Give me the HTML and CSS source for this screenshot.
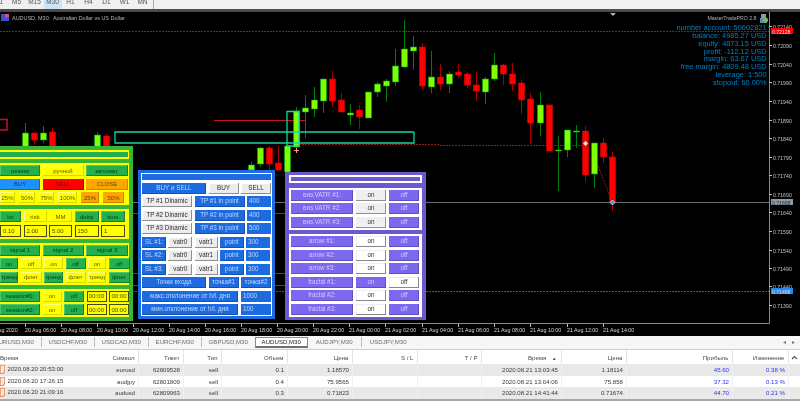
FILE: index.html
```html
<!DOCTYPE html>
<html lang="ru">
<head>
<meta charset="utf-8">
<title>AUDUSD, M30</title>
<link rel="stylesheet" href="styles.css">
</head>
<body>
<div class="app">
  <div class="toolbar">
    <div class="tf-group">
      <span class="tf">M1</span><span class="tf">M5</span><span class="tf">M15</span><span class="tf tf-on">M30</span><span class="tf">H1</span><span class="tf">H4</span><span class="tf">D1</span><span class="tf">W1</span><span class="tf">MN</span>
    </div>
  </div>

  <div class="chart">
    <svg class="plot" viewBox="0 12 800 324" width="800" height="324" xmlns="http://www.w3.org/2000/svg">
      <!-- levels -->
      <path class="dot-red" d="M0 31.5H769"/>
      <path class="dot-red" d="M296 144.5H440M440 145.5H585"/>
      <path class="dot-red" d="M594 155L612 202"/>
      <path class="line-grey" d="M0 202.5H769"/>
      <path class="dot-blue" d="M0 291.5H769"/>
      <path class="line-red" d="M214 120.5H305M0 146.5H131M133 213.5H290M133 273.5H290M133 285.5H290"/>
      <path class="box-red" d="M0 119.5H7V130H0"/>
      <!-- wicks -->
      <path class="wick-g" d="M25.5 123V147M43.5 126V143M97.5 132V147M251.5 162V170M260.5 147V167M296.5 107V149M305.5 95V138M314.5 87V117M323.5 79V113M350.5 104V125M368.5 92V118M377.5 82V97M386.5 79V102M395.5 49V86M404.5 20V67M413.5 36V70M431.5 51V93M449.5 71V93M485.5 77V104M494.5 53V81M540.5 92V136M558.5 136V191M567.5 130V157M576.5 125V148M594.5 143V188"/>
      <path class="wick-r" d="M34.5 133V145M52.5 128V147M106.5 134V147M269.5 146V170M278.5 146V170M332.5 71V107M341.5 93V112M359.5 105V129M422.5 43V89M440.5 64V90M458.5 64V78M467.5 72V88M476.5 72V101M503.5 64V85M512.5 63V91M521.5 80V114M530.5 93V144M585.5 126V182M603.5 138V163M612.5 152V211"/>
      <!-- bodies -->
      <path class="body-g" d="M22.5 133h6v14h-6zM40.5 133h6v7h-6zM94.5 135h6v12h-6zM248.5 165h6v5h-6zM257.5 148h6v16h-6zM284.5 146h6v26h-6zM293.5 111h6v36h-6zM302.5 108h6v4h-6zM311.5 100h6v9h-6zM320.5 79h6v22h-6zM347.5 113h6v2h-6zM365.5 92h6v26h-6zM374.5 84h6v8h-6zM383.5 81h6v5h-6zM392.5 66h6v16h-6zM401.5 49h6v18h-6zM410.5 47h6v4h-6zM428.5 77h6v10h-6zM446.5 74h6v10h-6zM482.5 79h6v13h-6zM491.5 65h6v14h-6zM537.5 105h6v18h-6zM555.5 150h6v1h-6zM564.5 130h6v20h-6zM573.5 131h6v1h-6zM591.5 143h6v31h-6z"/>
      <path class="body-r" d="M31.5 133h6v7h-6zM49.5 132h6v15h-6zM103.5 136h6v11h-6zM266.5 148h6v16h-6zM275.5 163h6v7h-6zM329.5 79h6v22h-6zM338.5 100h6v12h-6zM356.5 110h6v7h-6zM419.5 47h6v39h-6zM437.5 77h6v7h-6zM455.5 72h6v3h-6zM464.5 74h6v11h-6zM473.5 85h6v6h-6zM500.5 65h6v9h-6zM509.5 74h6v10h-6zM518.5 83h6v17h-6zM527.5 99h6v24h-6zM546.5 105h6v46h-6zM582.5 131h6v44h-6zM600.5 143h6v14h-6zM609.5 157h6v46h-6z"/>
      <!-- teal boxes -->
      <path class="box-teal" d="M414 132H115V143H414V132"/>
      <path class="box-teal" d="M287 146V111.5H299V146H287"/>
      <!-- markers -->
      <path class="mark-o" d="M296.5 148v5M294 150.5h5"/>
      <path class="mark-w" d="M585.5 141l2.5 2.5-2.5 2.5-2.5-2.5z"/>
      <path class="mark-b" d="M612.5 200l2.5 2.5-2.5 2.5-2.5-2.5z"/>
      <path class="tri" d="M610 13h6l-3 3z"/>
      <!-- frame -->
      <path class="frame" d="M769.5 12V323.5H0"/>
      <path class="tick" d="M769 26.5h3M769 45.5h3M769 64.5h3M769 82.5h3M769 101.5h3M769 120.5h3M769 138.5h3M769 157.5h3M769 175.5h3M769 194.5h3M769 212.5h3M769 231.5h3M769 250.5h3M769 268.5h3M769 286.5h3M769 305.5h3"/>
      <path class="tick" d="M25.5 324v3M61.5 324v3M97.5 324v3M133.5 324v3M169.5 324v3M205.5 324v3M241.5 324v3M277.5 324v3M313.5 324v3M349.5 324v3M385.5 324v3M422.5 324v3M458.5 324v3M494.5 324v3M530.5 324v3M567.5 324v3M603.5 324v3"/>
      <!-- symbol flag -->
      <rect class="flag-b" x="1" y="14" width="8" height="7"/>
      <path class="flag-r" d="M5 14h4v3.500H5z"/>
      <text class="chart-title" x="12" y="20">AUDUSD, M30:  Australian Dollar vs US Dollar</text>
      <!-- price axis -->
      <g class="price">
        <text x="773" y="28.500">0.72140</text><text x="773" y="47.500">0.72090</text><text x="773" y="66.500">0.72040</text><text x="773" y="84.500">0.71990</text><text x="773" y="103.500">0.71940</text><text x="773" y="122.500">0.71890</text><text x="773" y="140.500">0.71840</text><text x="773" y="159.500">0.71790</text><text x="773" y="177.500">0.71740</text><text x="773" y="196.500">0.71690</text><text x="773" y="214.500">0.71640</text><text x="773" y="233.500">0.71590</text><text x="773" y="252.500">0.71540</text><text x="773" y="270.500">0.71490</text><text x="773" y="288.500">0.71440</text><text x="773" y="307.500">0.71390</text>
      </g>
      <rect class="bd-red" x="771" y="28" width="22" height="6"/>
      <text class="bd-text" x="772" y="33.500">0.72128</text>
      <rect class="bd-grey" x="771" y="199" width="22" height="6"/>
      <text class="bd-text dark" x="772" y="204.500">0.71668</text>
      <rect class="bd-blue" x="771" y="288" width="22" height="6"/>
      <text class="bd-text" x="772" y="293.500">0.71458</text>
      <!-- time axis -->
      <g class="time">
        <text x="-12" y="331.500">20 Aug 2020</text><text x="25" y="331.500">20 Aug 06:00</text><text x="61" y="331.500">20 Aug 08:00</text><text x="97" y="331.500">20 Aug 10:00</text><text x="133" y="331.500">20 Aug 12:00</text><text x="169" y="331.500">20 Aug 14:00</text><text x="205" y="331.500">20 Aug 16:00</text><text x="241" y="331.500">20 Aug 18:00</text><text x="277" y="331.500">20 Aug 20:00</text><text x="313" y="331.500">20 Aug 22:00</text><text x="349" y="331.500">21 Aug 00:00</text><text x="385" y="331.500">21 Aug 02:00</text><text x="422" y="331.500">21 Aug 04:00</text><text x="458" y="331.500">21 Aug 06:00</text><text x="494" y="331.500">21 Aug 08:00</text><text x="530" y="331.500">21 Aug 10:00</text><text x="567" y="331.500">21 Aug 12:00</text><text x="603" y="331.500">21 Aug 14:00</text>
      </g>
    </svg>

    <div class="account">
      <div class="acc-head"><span>MasterTradePRO 2.8</span>
        <svg class="acc-ico" width="8" height="9" viewBox="0 0 8 9" xmlns="http://www.w3.org/2000/svg"><rect x="1" y="0" width="5" height="4" fill="#8a9aa8"/><rect x="0" y="4" width="7" height="5" fill="#5f8fb0"/><circle cx="5.500" cy="6" r="2.500" fill="#6fc04a"/></svg>
      </div>
      <div>number account: 50602821</div>
      <div>balance: 4985.27 USD</div>
      <div>equity: 4873.15 USD</div>
      <div>profit: -112.12 USD</div>
      <div>margin: 63.67 USD</div>
      <div>free margin: 4809.48 USD</div>
      <div>leverage: 1:500</div>
      <div>stopout: 60.00%</div>
    </div>

    <section class="panel-g">
      <div class="g-title"><span class="g-bar"></span></div>
      <div class="g-sec">
        <div class="row gc-3"><button class="g-btn">режим</button><button class="y-btn">ручной</button><button class="g-btn">автомат.</button></div>
        <div class="row gc-3"><button class="b-btn">BUY</button><button class="r-btn">SELL</button><button class="o-btn">CLOSE</button></div>
        <div class="row gc-pct"><button class="y-btn">25%</button><button class="y-btn">50%</button><button class="y-btn">75%</button><button class="y-btn">100%</button><button class="o-btn">25%</button><button class="o-btn">50%</button></div>
      </div>
      <div class="g-sec">
        <div class="row gc-5"><button class="g-btn">lot</button><button class="y-btn">risk</button><button class="y-btn">MM</button><button class="g-btn">delta</button><button class="g-btn">time</button></div>
        <div class="row gc-5 tall"><span class="g-in">0.10</span><span class="g-in">2.00</span><span class="g-in">5.00</span><span class="g-in">150</span><span class="g-in">1</span></div>
      </div>
      <div class="g-sec">
        <div class="row gc-3"><button class="g-btn">signal 1</button><button class="g-btn">signal 2</button><button class="g-btn">signal 3</button></div>
        <div class="row gc-6"><button class="g-btn">on</button><button class="y-btn">off</button><button class="y-btn">on</button><button class="g-btn">off</button><button class="y-btn">on</button><button class="g-btn">off</button></div>
        <div class="row gc-6"><button class="g-btn">тренд</button><button class="y-btn">флет</button><button class="g-btn">тренд</button><button class="y-btn">флет</button><button class="y-btn">тренд</button><button class="g-btn">флет</button></div>
      </div>
      <div class="g-sec">
        <div class="row gc-ses"><button class="g-btn">session#1:</button><button class="y-btn">on</button><button class="g-btn">off</button><span class="g-in c">00:00</span><span class="g-in c">00:00</span></div>
        <div class="row gc-ses"><button class="g-btn">session#2:</button><button class="y-btn">on</button><button class="g-btn">off</button><span class="g-in c">00:00</span><span class="g-in c">00:00</span></div>
      </div>
    </section>

    <section class="panel-b">
      <div class="b-title"></div>
      <div class="row bc-a"><button class="bl">BUY и SELL</button><button class="gr">BUY</button><button class="gr">SELL</button></div>
      <div class="row bc-b"><button class="gr">TP #1 Dinamic</button><button class="bl">TP #1 in point</button><span class="bl-in">400</span></div>
      <div class="row bc-b"><button class="gr">TP #2 Dinamic</button><button class="bl">TP #2 in point</button><span class="bl-in">400</span></div>
      <div class="row bc-b"><button class="gr">TP #3 Dinamic</button><button class="bl">TP #3 in point</button><span class="bl-in">500</span></div>
      <div class="row bc-c"><button class="bl">SL #1:</button><button class="gr">vatr0</button><button class="gr">vatr1</button><button class="bl">point</button><span class="bl-in">300</span></div>
      <div class="row bc-c"><button class="bl">SL #2:</button><button class="gr">vatr0</button><button class="gr">vatr1</button><button class="bl">point</button><span class="bl-in">300</span></div>
      <div class="row bc-c"><button class="bl">SL #3:</button><button class="gr">vatr0</button><button class="gr">vatr1</button><button class="bl">point</button><span class="bl-in">300</span></div>
      <div class="row bc-a"><button class="bl">Точки входа</button><button class="bl">точка#1</button><button class="bl">точка#2</button></div>
      <div class="row bc-d"><button class="bl">макс.отклонение от h/l. дня</button><span class="bl-in">1000</span></div>
      <div class="row bc-d"><button class="bl">мин.отклонение от h/l. дня</button><span class="bl-in">100</span></div>
    </section>

    <section class="panel-p">
      <div class="p-title"></div>
      <div class="p-sec">
        <div class="row pc"><button class="pu">виз.VATR #1:</button><button class="gy">on</button><button class="pu">off</button></div>
        <div class="row pc"><button class="pu">виз.VATR #2:</button><button class="gy">on</button><button class="pu">off</button></div>
        <div class="row pc"><button class="pu">виз.VATR #3:</button><button class="gy">on</button><button class="pu">off</button></div>
      </div>
      <div class="p-sec">
        <div class="row pc"><button class="pu">arrow #1:</button><button class="wh">on</button><button class="pu">off</button></div>
        <div class="row pc"><button class="pu">arrow #2:</button><button class="wh">on</button><button class="pu">off</button></div>
        <div class="row pc"><button class="pu">arrow #3:</button><button class="wh">on</button><button class="pu">off</button></div>
        <div class="row pc"><button class="pu">fractal #1:</button><button class="pu">on</button><button class="wh">off</button></div>
        <div class="row pc"><button class="pu">fractal #2:</button><button class="wh">on</button><button class="pu">off</button></div>
        <div class="row pc"><button class="pu">fractal #3:</button><button class="wh">on</button><button class="pu">off</button></div>
      </div>
    </section>
  </div>

  <div class="tabs">
    <span class="tab first">EURUSD,M30</span><span class="tab">USDCHF,M30</span><span class="tab">USDCAD,M30</span><span class="tab">EURCHF,M30</span><span class="tab">GBPUSD,M30</span><span class="tab active">AUDUSD,M30</span><span class="tab">AUDJPY,M30</span><span class="tab last">USDJPY,M30</span>
    <span class="tab-arrows"><span>◂</span><span>▸</span></span>
  </div>

  <table class="orders">
    <colgroup>
      <col class="c1"><col class="c2"><col class="c3"><col class="c4"><col class="c5"><col class="c6"><col class="c7"><col class="c8"><col class="c9"><col class="c10"><col class="c11"><col class="c12"><col class="c13">
    </colgroup>
    <thead>
      <tr><th class="l nosep">Время</th><th>Символ</th><th>Тикет</th><th>Тип</th><th>Объем</th><th>Цена</th><th>S / L</th><th>T / P</th><th class="sorted">Время <span class="sort">▲</span></th><th>Цена</th><th>Прибыль</th><th>Изменение</th><th class="sb"><svg width="7" height="5" viewBox="0 0 7 5" xmlns="http://www.w3.org/2000/svg"><path d="M1 4l2.500-2.500L6 4" fill="none" stroke="#555" stroke-width="1.200"/></svg></th></tr>
    </thead>
    <tbody>
      <tr class="alt"><td class="l nosep"><svg class="doc" width="5" height="9" viewBox="0 0 5 9" xmlns="http://www.w3.org/2000/svg"><path d="M0 0h5v6L3 9H0z" fill="#fbe6d8" stroke="#e2622b"/></svg>2020.08.20 20:53:00</td><td>eurusd</td><td>62809528</td><td>sell</td><td>0.1</td><td>1.18570</td><td></td><td></td><td>2020.08.21 13:03:45</td><td>1.18114</td><td class="pr">45.60</td><td class="pr">0.38 %</td><td></td></tr>
      <tr><td class="l nosep"><svg class="doc" width="5" height="9" viewBox="0 0 5 9" xmlns="http://www.w3.org/2000/svg"><path d="M0 0h5v6L3 9H0z" fill="#fbe6d8" stroke="#e2622b"/></svg>2020.08.20 17:26:15</td><td>audjpy</td><td>62801809</td><td>sell</td><td>0.4</td><td>75.9565</td><td></td><td></td><td>2020.08.21 13:04:06</td><td>75.858</td><td class="pr">37.32</td><td class="pr">0.13 %</td><td></td></tr>
      <tr class="alt"><td class="l nosep"><svg class="doc" width="5" height="9" viewBox="0 0 5 9" xmlns="http://www.w3.org/2000/svg"><path d="M0 0h5v6L3 9H0z" fill="#fbe6d8" stroke="#e2622b"/></svg>2020.08.20 21:09:16</td><td>audusd</td><td>62809963</td><td>sell</td><td>0.3</td><td>0.71823</td><td></td><td></td><td>2020.08.21 14:41:44</td><td>0.71674</td><td class="pr">44.70</td><td class="pr">0.21 %</td><td></td></tr>
    </tbody>
  </table>
</div>
</body>
</html>
```
FILE: styles.css
```css
* { box-sizing: border-box; }
html, body { margin: 0; padding: 0; background: #a8a8a8; }
body { font-family: "Liberation Sans", Arial, sans-serif; }
.app { width: 800px; height: 401px; overflow: hidden; display: flex; flex-direction: column; filter: blur(0.4px); }

/* toolbar */
.toolbar { height: 12px; flex: none; background: #f0f0f0; border-bottom: 3px solid; border-image: linear-gradient(#d0d0d0, #444) 1; overflow: hidden; }
.tf-group { display: flex; width: 164px; height: 9px; margin-left: -10.500px; border-right: 1px solid #a8a8a8; }
.tf { width: 18px; height: 9px; font-size: 6.500px; line-height: 4px; text-align: center; color: #555; }
.tf-on { background: #cce4f7; }

/* chart */
.chart { position: relative; height: 324px; flex: none; background: #000; overflow: hidden; }
.plot { position: absolute; left: 0; top: 0; display: block; }
.dot-red, .dot-blue, .line-grey, .line-red, .box-red, .box-teal, .wick-g, .wick-r, .frame, .tick, .mark-o { fill: none; }
.dot-red { stroke: #8c1f14; stroke-dasharray: 2 1; }
.dot-blue { stroke: #1668b8; stroke-dasharray: 2 1; }
.line-grey { stroke: #66707a; }
.line-red { stroke: #c8102e; }
.box-red { stroke: #c8102e; stroke-width: 1.500; }
.box-teal { stroke: #10d8a0; stroke-width: 1.300; }
.wick-g { stroke: #008000; }
.wick-r { stroke: #a80000; }
.body-g { fill: #7fff00; stroke: #00a020; stroke-width: .6; }
.body-r { fill: #ff0000; stroke: #d00000; stroke-width: .6; }
.mark-o { stroke: #ff9a7a; }
.mark-w { fill: #f4e6e0; }
.mark-b { fill: #3f9ae8; stroke: #fff; stroke-width: .6; }
.tri { fill: #9fb4c8; }
.frame { stroke: #8a8a8a; }
.tick { stroke: #c0c0c0; }
.flag-b { fill: #3a50d8; }
.flag-r { fill: #d8506a; }
.chart-title { font-size: 5.460px; fill: #b4b4b4; white-space: pre; }
.price text { font-size: 5.100px; fill: #c8c8c8; letter-spacing: .05px; }
.time text { font-size: 5.300px; fill: #d8d8d8; }
.bd-red { fill: #ff0000; }
.bd-grey { fill: #8a9aa8; }
.bd-blue { fill: #1e8cf0; }
.bd-text { font-size: 5.100px; fill: #f0d0d0; }
.bd-text.dark { fill: #283038; }

/* account block */
.account { position: absolute; right: 33.500px; top: 1px; width: 120px; text-align: right; font-size: 7.400px; line-height: 7.850px; color: #0080c0; }
.acc-head { display: flex; justify-content: flex-end; align-items: center; gap: 3px; height: 11px; margin-right: -1px; font-size: 5.200px; color: #b0b0b0; }
.acc-ico { flex: none; }

/* shared rows */
.row { display: grid; height: 11px; }
button, .g-in, .bl-in { display: flex; align-items: center; justify-content: center; margin: 0; padding: 0; border: 0; border-radius: 0; font-family: inherit; font-size: 6.300px; line-height: 1; overflow: hidden; white-space: nowrap; }

/* green panel */
.panel-g { position: absolute; left: 0; top: 134px; width: 133px; height: 175px; padding: 4px 4px 3px 0; display: flex; flex-direction: column; gap: 4px; background: #37b537; }
.panel-g button, .panel-g .g-in { font-size: 6px; }
.g-title { height: 9px; flex: none; padding: 2px 1px 2px 0; background: #ffff00; }
.g-bar { display: block; height: 100%; background: #22b14c; }
.g-sec { flex: none; padding: 2px 1px 2px 0; display: flex; flex-direction: column; gap: 2.500px; background: #ffff00; }
.gc-3 { grid-template-columns: 40px 41px 42px; column-gap: 2.500px; }
.gc-pct { grid-template-columns: 15px 16px 15px 19px 18px 21px; column-gap: 4px; }
.gc-5 { grid-template-columns: 21px 23px 23px 24px 24px; column-gap: 2.500px; }
.gc-6 { grid-template-columns: 18px 21px 19px 20px 18px 21px; column-gap: 2.500px; }
.gc-ses { grid-template-columns: 40px 19px 20px 20px 20px; column-gap: 2.500px; }
.row.tall { height: 12px; }
.g-btn { background: #22b14c; color: #0b3d12; box-shadow: inset -1px -1px 0 #16803a, inset 1px 1px 0 #52c86a; }
.y-btn { background: #ffff00; color: #5c5c00; box-shadow: inset -1px -1px 0 #d8d800, inset 1px 1px 0 #ffff80; }
.b-btn { background: #1e90ff; color: #123a70; box-shadow: inset -1px -1px 0 #1868c0; }
.r-btn { background: #ff0000; color: #700000; box-shadow: inset -1px -1px 0 #c00000; }
.o-btn { background: #ffa500; color: #6a4400; box-shadow: inset -1px -1px 0 #cc8400; }
.g-in { justify-content: flex-start; padding-left: 2px; background: #ffff00; color: #4a4a00; border: 1px solid #4a4a10; }
.g-in.c { justify-content: center; padding: 0; }

/* blue panel */
.panel-b { position: absolute; left: 138px; top: 158px; width: 137px; height: 149px; padding: 1px; display: flex; flex-direction: column; gap: 2.700px; background: #fff; border: 3px solid #1c6be0; }
.b-title { height: 6px; flex: none; background: #1c6be0; }
.bc-a { grid-template-columns: 64px 30px 30px; column-gap: 2.500px; }
.bc-b { grid-template-columns: 50px 50px 24px; column-gap: 2.500px; }
.bc-c { grid-template-columns: 24px 24px 23px 24px 24px; column-gap: 2.250px; }
.bc-d { grid-template-columns: 96px 30px; column-gap: 3px; }
.bl { background: #1c6be0; color: #c4d8f8; box-shadow: inset -1px -1px 0 #1550b0; }
.gr { background: #ececec; color: #303030; box-shadow: inset -1px -1px 0 #909090, inset 1px 1px 0 #fff; }
.bl-in { justify-content: flex-start; padding-left: 2px; background: #1c6be0; color: #c4d8f8; }

/* purple panel */
.panel-p { position: absolute; left: 285px; top: 160px; width: 141px; height: 148px; padding: 3px 4px; display: flex; flex-direction: column; gap: 4.500px; background: #6a5acd; }
.p-title { height: 8px; flex: none; border: 2px solid #fff; background: #6a5acd; }
.p-sec { flex: none; padding: 2px; display: flex; flex-direction: column; gap: 2.500px; background: #fff; }
.pc { grid-template-columns: 62px 30px 30px; column-gap: 3px; }
.pu { background: #7b68ee; color: #d4ccff; box-shadow: inset -1px -1px 0 #5e50c0; }
.gy { background: #efefef; color: #333; box-shadow: inset -1px -1px 0 #909090; }
.wh { background: #fff; color: #333; box-shadow: inset -1px -1px 0 #888, inset 1px 1px 0 #eee; }

/* tabs */
.tabs { height: 14px; flex: none; display: flex; align-items: flex-start; padding-top: 1px; background: #f6f6f6; border-bottom: 1px solid #cfcfcf; }
.tab { width: 53.500px; height: 10px; flex: none; font-size: 6.100px; line-height: 10px; text-align: center; color: #6c6c6c; border-right: 1px solid #bdbdbd; }
.tab.first { margin-left: -12px; }
.tab.active { height: 11px; margin-left: -1px; background: #fff; color: #222; border: 1px solid #8a8a8a; border-bottom: 2px solid #707070; line-height: 8px; }
.tab.last { border-right: 0; }
.tab-arrows { margin-left: auto; margin-right: 5px; display: flex; gap: 6px; font-size: 6px; line-height: 10px; color: #777; }

/* table */
.orders { width: 800px; table-layout: fixed; border-collapse: collapse; font-size: 6.100px; flex: none; background: #fff; }
.c1 { width: 100px; } .c2 { width: 38px; } .c3 { width: 45px; } .c4 { width: 38px; } .c5 { width: 66px; } .c6 { width: 65px; } .c7 { width: 65px; } .c8 { width: 64px; } .c9 { width: 80px; } .c10 { width: 65px; } .c11 { width: 106px; } .c12 { width: 56px; } .c13 { width: 12px; }
.orders th { height: 14px; padding: 0 3px 0 0; font-weight: 400; text-align: right; color: #4a4a4a; background: #fff; border-right: 1px solid #e4e4e4; white-space: nowrap; overflow: hidden; }
.orders td { height: 11.500px; padding: 0 2.500px 0 0; text-align: right; color: #3a3a3a; white-space: nowrap; border-right: 1px solid #f0f0f0; overflow: hidden; }
.orders th.l, .orders td.l { text-align: left; }
.orders .nosep { border-right: 0; }
.orders tr.alt td { background: #e9e9e9; }
.orders td.pr { color: #3030f0; }
.doc { margin-right: 2.500px; vertical-align: middle; }
.orders th.sorted { padding-right: 4px; }
.sort { font-size: 4.500px; margin-left: 4px; color: #444; }
.orders th.sb { padding: 0; text-align: center; border-right: 0; }
```
